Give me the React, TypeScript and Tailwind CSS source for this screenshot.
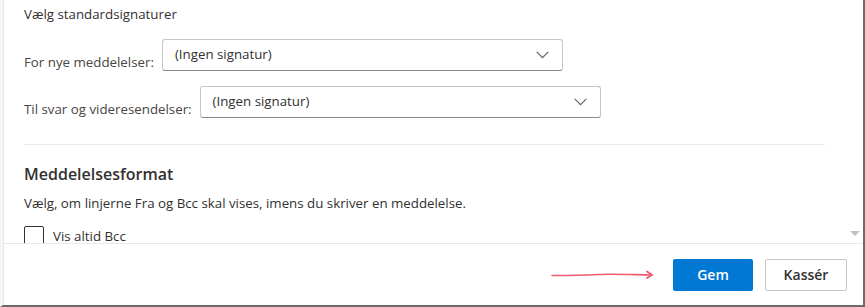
const font = { fontFamily: '"Segoe UI", "Open Sans", sans-serif' };

function Select({ value }: { value: string }) {
  return (
    <div className="flex h-[32px] w-[401px] items-center justify-between rounded-[3px] border border-[#c8c6c4] border-b-[#8a8886] bg-white pl-[12px] pr-[13px]">
      <span className="text-[13.3px] text-[#323130]">{value}</span>
      <svg width="13" height="8" viewBox="0 0 13 8">
        <path d="M0.7 0.8 L6.5 6.6 L12.3 0.8" stroke="#605e5c" strokeWidth="1.1" fill="none" />
      </svg>
    </div>
  );
}

export default function App() {
  return (
    <div
      className="flex h-[307px] w-[865px] flex-col overflow-hidden border-b-2 border-r-2 border-b-[#6b6b6b] border-r-[#6b6b6b] border-l-[3px] border-l-[#f6f6f6] bg-white"
      style={font}
    >
      <div className="flex h-[243px] border-l border-[#e8e8e8]">
        <div className="flex-1 overflow-hidden pl-[20px] pr-[22px]">
          <div className="pt-[4px] text-[13.3px] leading-[20px] text-[#323130]">Vælg standardsignaturer</div>

          <div className="mt-[15px] flex items-start gap-[8px]">
            <span className="mt-[14px] text-[13.3px] leading-[18px] text-[#484644]">For nye meddelelser:</span>
            <Select value="(Ingen signatur)" />
          </div>

          <div className="mt-[15px] flex items-start gap-[8px]">
            <span className="mt-[14px] text-[13.3px] leading-[18px] text-[#484644]">Til svar og videresendelser:</span>
            <Select value="(Ingen signatur)" />
          </div>

          <div className="mt-[26px] h-px bg-[#edebe9]" />

          <div className="mt-[17px] text-[16px] font-semibold leading-[24px] text-[#323130]">Meddelelsesformat</div>
          <div className="mt-[7px] text-[13.3px] leading-[20px] text-[#323130]">
            Vælg, om linjerne Fra og Bcc skal vises, imens du skriver en meddelelse.
          </div>
          <div className="mt-[13px] flex items-center gap-[9px]">
            <div className="h-[20px] w-[20px] shrink-0 rounded-[2px] border border-[#323130]" />
            <span className="text-[13.3px] leading-[20px] text-[#323130]">Vis altid Bcc</span>
          </div>
        </div>
        <div className="flex w-[16px] flex-col justify-end pb-[6px]">
          <svg width="10" height="6" viewBox="0 0 10 6" className="ml-[3px]">
            <path d="M0 0 H10 L5 5 Z" fill="#c2c2c2" />
          </svg>
        </div>
      </div>

      <div className="flex flex-1 items-center justify-end gap-[12px] border-t border-l border-[#e8e8e8] pr-[16px]">
        <svg width="106" height="12" viewBox="0 0 106 12" className="mr-[5px]">
          <path
            d="M2 6.5 C 30 6.5, 40 6, 48 5.5 C 60 4.8, 80 5.6, 101 6"
            stroke="#ef5a6f"
            strokeWidth="1.6"
            fill="none"
            strokeLinecap="round"
          />
          <path d="M97 2.5 L102 6 L97 9" stroke="#ef5a6f" strokeWidth="1.8" fill="none" strokeLinecap="round" />
        </svg>
        <button className="h-[32px] w-[80px] rounded-[2px] bg-[#0078d4] text-[14px] font-semibold text-white">Gem</button>
        <button className="h-[32px] w-[82px] rounded-[2px] border border-[#c8c6c4] bg-white text-[14px] font-semibold text-[#323130]">
          Kassér
        </button>
      </div>
    </div>
  );
}
